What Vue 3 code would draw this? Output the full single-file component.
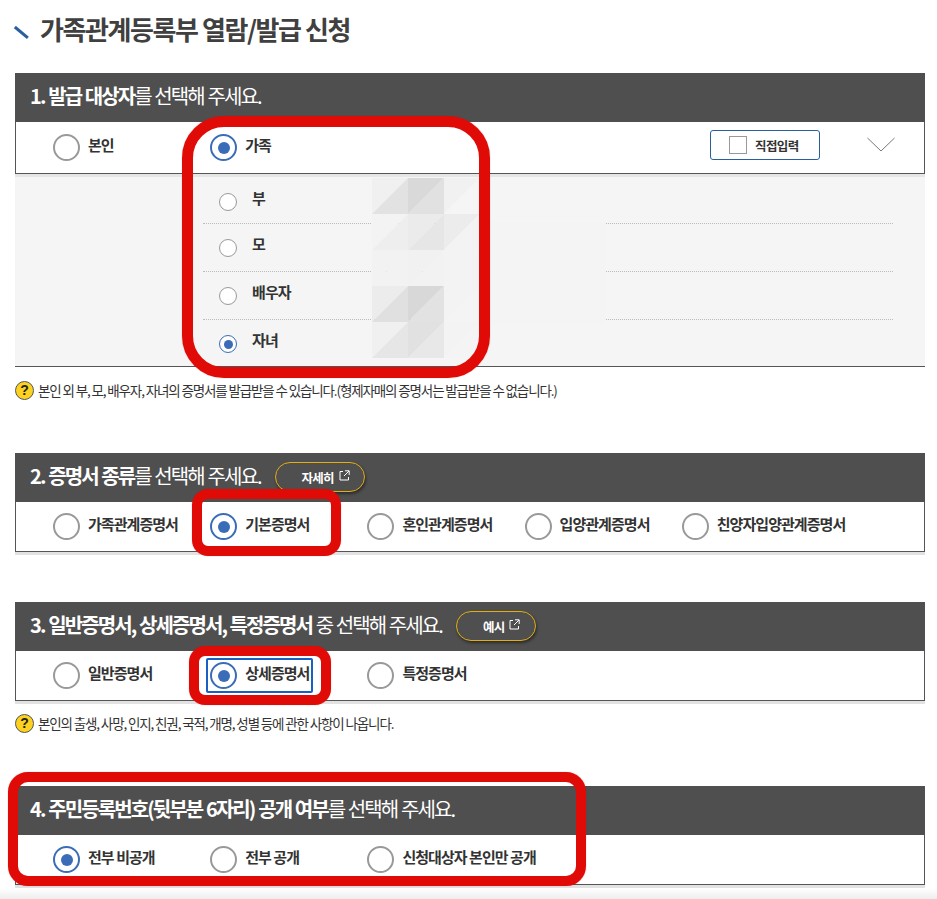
<script setup>
const cells = [
  ['#f0f0f0','#e2e2e2'],['#d9d9d9','#e1e1e1'],['#f1f1f1','#f5f5f5'],
  ['#f3f3f3','#eeeeee'],['#ebebeb','#e6e6e6'],['#ececec','#f3f3f3'],
  ['#f2f2f2','#f2f2f2'],['#f1f1f1','#f2f2f2'],['#f3f3f3','#f3f3f3'],
  ['#ececec','#e0e0e0'],['#d8d8d8','#e2e2e2'],['#f3f3f3','#f4f4f4'],
  ['#f0f0f0','#e6e6e6'],['#e1e1e1','#e8e8e8'],['#f3f3f3','#f4f4f4'],
].map((c, i) => {
  const x = (i % 3) * 36, y = Math.floor(i / 3) * 36
  return {
    id: i, c0: c[0], c1: c[1],
    tl: `${x},${y} ${x + 36},${y} ${x},${y + 36}`,
    br: `${x + 36},${y} ${x + 36},${y + 36} ${x},${y + 36}`,
  }
})
const family = [
  { label: '부', on: false }, { label: '모', on: false },
  { label: '배우자', on: false }, { label: '자녀', on: true },
]
const kinds = [
  { label: '가족관계증명서', on: false }, { label: '기본증명서', on: true },
  { label: '혼인관계증명서', on: false }, { label: '입양관계증명서', on: false },
  { label: '친양자입양관계증명서', on: false },
]
const details = [
  { label: '일반증명서', on: false }, { label: '상세증명서', on: true }, { label: '특정증명서', on: false },
]
const open = [
  { label: '전부 비공개', on: true }, { label: '전부 공개', on: false }, { label: '신청대상자 본인만 공개', on: false },
]
</script>

<template>
  <div class="page">
    <h1 class="title"><i class="tick"></i>가족관계등록부 열람/발급 신청</h1>

    <section class="sec first">
      <h2 class="head"><span><b>1. 발급 대상자</b>를 선택해 주세요.</span></h2>
      <div class="body">
        <label class="opt"><i class="radio"></i><span>본인</span></label>
        <label class="opt"><i class="radio on"></i><span>가족</span></label>
        <button class="direct"><i class="check"></i>직접입력</button>
        <svg class="chev" width="28" height="15" viewBox="0 0 28 15"><path d="M0.5 1 L14 14 L27.5 1" fill="none" stroke="#555" stroke-width="0.8"/></svg>
      </div>
      <div class="panel">
        <div v-for="f in family" :key="f.label" class="row">
          <i class="radio small" :class="{ on: f.on }"></i><span>{{ f.label }}</span>
        </div>
      </div>
      <p class="note"><i class="help">?</i>본인 외 부, 모, 배우자, 자녀의 증명서를 발급받을 수 있습니다.(형제자매의 증명서는 발급받을 수 없습니다.)</p>
    </section>

    <section class="sec s2">
      <h2 class="head"><span><b>2. 증명서 종류</b>를 선택해 주세요.</span>
        <a class="pill">자세히<svg width="11" height="11" viewBox="0 0 11 11"><path d="M4 1.5H1V10H9.5V7M6 0.8H10.2V5M10 1L5 6" fill="none" stroke="#fff" stroke-width="1"/></svg></a>
      </h2>
      <div class="body">
        <label v-for="k in kinds" :key="k.label" class="opt"><i class="radio" :class="{ on: k.on }"></i><span>{{ k.label }}</span></label>
      </div>
    </section>

    <section class="sec s3">
      <h2 class="head"><span><b>3. 일반증명서, 상세증명서, 특정증명서</b> 중 선택해 주세요.</span>
        <a class="pill short">예시<svg width="11" height="11" viewBox="0 0 11 11"><path d="M4 1.5H1V10H9.5V7M6 0.8H10.2V5M10 1L5 6" fill="none" stroke="#fff" stroke-width="1"/></svg></a>
      </h2>
      <div class="body">
        <label v-for="k in details" :key="k.label" class="opt"><i class="radio" :class="{ on: k.on }"></i><span>{{ k.label }}</span></label>
      </div>
      <p class="note n3"><i class="help">?</i>본인의 출생, 사망, 인지, 친권, 국적, 개명, 성별 등에 관한 사항이 나옵니다.</p>
    </section>

    <section class="sec s4">
      <h2 class="head"><span><b>4. 주민등록번호(뒷부분 6자리) 공개 여부</b>를 선택해 주세요.</span></h2>
      <div class="body">
        <label v-for="k in open" :key="k.label" class="opt"><i class="radio" :class="{ on: k.on }"></i><span>{{ k.label }}</span></label>
      </div>
    </section>

    <div class="foot"></div>

    <div class="veil"></div>
    <svg class="mosaic" width="108" height="180" viewBox="0 0 108 180">
      <g v-for="c in cells" :key="c.id">
        <polygon :points="c.tl" :fill="c.c0"/>
        <polygon :points="c.br" :fill="c.c1"/>
      </g>
    </svg>
    <div class="focus"></div>
    <div class="mark m1"></div>
    <div class="mark m2"></div>
    <div class="mark m3"></div>
    <div class="mark m4"></div>
  </div>
</template>

<style scoped>
.page {
  position: relative;
  width: 937px;
  height: 899px;
  overflow: hidden;
  background: #fff;
  font-family: "Noto Sans CJK KR", "Noto Sans", sans-serif;
  color: #333;
}
.title {
  display: flex;
  align-items: center;
  height: 56px;
  margin: 0 0 17px 15px;
  font-size: 26px;
  font-weight: 700;
  letter-spacing: -1.42px;
  color: #404040;
}
.tick {
  width: 17px;
  height: 2.5px;
  margin: 8px 10px 0 -2px;
  background: #2a5f9e;
  transform: rotate(40deg);
}
.sec { margin: 0 12px 0 15px; }
.s2 { margin-top: 53px; }
.s3 { margin-top: 50px; }
.s4 { margin-top: 53px; }
.head {
  display: flex;
  align-items: center;
  box-sizing: border-box;
  height: 49px;
  margin: 0;
  padding: 0 0 4px 15px;
  background: #4f4f4f;
  color: #fff;
  font-size: 20px;
  font-weight: 400;
  letter-spacing: -1.9px;
  word-spacing: 1px;
  white-space: nowrap;
}
.head b { font-weight: 700; }
.pill {
  display: flex;
  align-items: center;
  box-sizing: border-box;
  width: 90px;
  height: 30px;
  margin: 3px 0 0 14px;
  padding-left: 26px;
  border: 1px solid #e3ae12;
  border-radius: 15px;
  background: #4f4f4f;
  box-shadow: 1px 2px 3px rgba(0, 0, 0, 0.45);
  color: #fff;
  font-size: 12.5px;
  font-weight: 700;
  letter-spacing: -0.8px;
}
.pill svg { margin: -3px 0 0 5px; }
.pill.short { width: 80px; }
.body {
  position: relative;
  display: flex;
  align-items: center;
  box-sizing: border-box;
  height: 50px;
  padding-left: 37px;
  border: 1px solid #555;
  border-top: 0;
  background: #fff;
  box-shadow: 0 3px 0 #e2e2e2;
}
.first .body { height: 52px; box-shadow: none; }
.opt {
  display: flex;
  align-items: center;
  flex: none;
  width: 157.2px;
  font-size: 15px;
  font-weight: 700;
  letter-spacing: -0.95px;
  white-space: nowrap;
  color: #333;
}
.opt span { margin: -7px 0 0 8px; }
.radio {
  position: relative;
  flex: none;
  box-sizing: border-box;
  width: 27px;
  height: 27px;
  border: 2px solid #999;
  border-radius: 50%;
  background: #fff;
}
.radio.on { border-color: #3a6cb8; }
.radio.on::after {
  content: "";
  position: absolute;
  inset: 5.5px;
  border-radius: 50%;
  background: #3a6cb8;
}
.radio.small { width: 18px; height: 18px; border-width: 1.5px; }
.radio.small.on::after { inset: 3.5px; }
.direct {
  position: absolute;
  left: 694px;
  top: 8px;
  display: flex;
  align-items: center;
  box-sizing: border-box;
  width: 110px;
  height: 30px;
  padding: 0 0 0 18px;
  border: 1.5px solid #2a5f9e;
  border-radius: 3px;
  background: #fff;
  font-family: inherit;
  font-size: 12.5px;
  font-weight: 700;
  letter-spacing: -0.6px;
  color: #333;
}
.check {
  box-sizing: border-box;
  width: 18px;
  height: 18px;
  margin-right: 8px;
  border: 1px solid #999;
}
.chev { position: absolute; left: 851px; top: 15px; }
.panel {
  box-sizing: border-box;
  height: 193px;
  padding: 3px 32px 0 188px;
  border-top: 3px solid #e6e6e6;
  border-bottom: 1px solid #555;
  background: #f5f5f5;
}
.row {
  display: flex;
  align-items: center;
  box-sizing: border-box;
  height: 48px;
  padding-left: 16px;
  border-bottom: 1px dotted #bbb;
  font-size: 15px;
  font-weight: 700;
  letter-spacing: -0.9px;
  color: #333;
}
.row:first-child { height: 44px; }
.row:last-child { border-bottom: 0; }
.row span { margin: -9px 0 0 15px; }
.note {
  display: flex;
  align-items: center;
  height: 20px;
  margin: 13px 0 0;
  font-size: 13.5px;
  letter-spacing: -1.13px;
  color: #333;
  white-space: nowrap;
}
.note.n3 { margin-top: 12px; }
.help {
  flex: none;
  box-sizing: border-box;
  width: 19px;
  height: 19px;
  margin-right: 4px;
  border: 1px solid #555;
  border-radius: 50%;
  background: #fcd21f;
  font-family: "Liberation Sans", sans-serif;
  font-size: 14px;
  font-style: normal;
  font-weight: 700;
  line-height: 17px;
  letter-spacing: 0;
  text-align: center;
  color: #222;
}
.foot {
  position: absolute;
  left: 0;
  right: 0;
  bottom: 0;
  height: 11px;
  background: linear-gradient(#fff, #eeeeee);
}
.veil {
  position: absolute;
  left: 445px;
  top: 222px;
  width: 161px;
  height: 102px;
  background: #f4f4f4;
}
.mosaic { position: absolute; left: 372px; top: 178px; }
.focus {
  position: absolute;
  left: 206px;
  top: 658px;
  box-sizing: border-box;
  width: 107px;
  height: 35px;
  border: 2px solid #1a5fc4;
  border-radius: 2px;
}
.mark {
  position: absolute;
  box-sizing: border-box;
  border: 10px solid #e00a06;
  box-shadow: 0 0 1px rgba(224, 10, 6, 0.5);
}
.m1 { left: 182px; top: 116px; width: 308px; height: 262px; border-width: 11px; border-radius: 42px; }
.m2 { left: 192px; top: 489px; width: 149px; height: 67px; border-radius: 16px; }
.m3 { left: 189px; top: 646px; width: 142px; height: 59px; border-radius: 16px; }
.m4 { left: 8px; top: 772px; width: 578px; height: 114px; border-radius: 20px; }
</style>
